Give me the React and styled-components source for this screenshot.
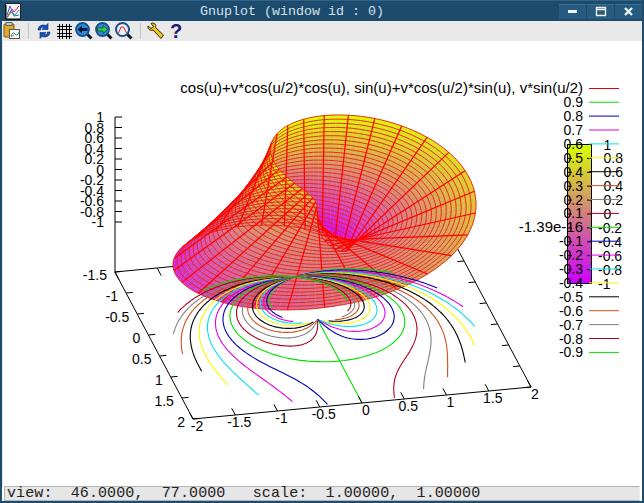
import React from 'react';
import styled, { createGlobalStyle } from 'styled-components';

const GlobalStyle = createGlobalStyle`
  html, body {
    margin: 0;
    padding: 0;
    background: #fff;
  }
`;

const Window = styled.div`
  width: 644px;
  height: 503px;
  box-sizing: border-box;
  display: flex;
  flex-direction: column;
  background: #fff;
  border: solid #1e4c6e;
  border-width: 0 2px 2px;
  overflow: hidden;
`;

const TitleBar = styled.div`
  height: 21px;
  flex: none;
  margin: 0 -2px;
  display: flex;
  align-items: center;
  background: #1c4b6d;
  border-top: 1px solid #2f6488;
  box-sizing: border-box;
  padding: 0 2px 0 5px;
`;

const Title = styled.div`
  flex: 1;
  padding-left: 4px;
  text-align: center;
  color: #d4e0e8;
  font: 13.33px 'Liberation Mono', monospace;
  white-space: pre;
`;

const WindowButtons = styled.div`
  display: flex;
  gap: 1px;
`;

const WindowButton = styled.div`
  width: 27px;
  height: 15px;
  display: flex;
  align-items: center;
  justify-content: center;
  background: #265a7e;
  border-top: 1px solid #3c7092;
  box-sizing: border-box;
`;

const Toolbar = styled.div`
  height: 20px;
  flex: none;
  display: flex;
  align-items: center;
  background: #e9e9e9;
`;

const ToolButton = styled.div`
  width: 20px;
  height: 20px;
  display: flex;
  align-items: center;
  justify-content: center;
`;

const ToolSeparator = styled.div`
  width: 12px;
  height: 16px;
  display: flex;
  justify-content: center;

  &::before {
    content: '';
    width: 1px;
    background: #c4c4c4;
  }
`;

const HelpMark = styled.span`
  color: #1a1a78;
  font: bold 20px 'Liberation Sans', sans-serif;
  line-height: 20px;
`;

const PlotArea = styled.div`
  flex: 1;
  min-height: 0;
  background: #fff;
  border-left: 1px solid #dfe5ea;

  svg {
    display: block;
    width: 100%;
    height: 100%;
  }
`;

const PlotLabel = styled.text`
  font: ${(p) => (p.$wide ? 15 : 14)}px 'Liberation Sans', sans-serif;
  fill: #000;
`;

const StatusBar = styled.div`
  height: 15px;
  flex: none;
  margin: 0 2px 0 2px;
  box-sizing: border-box;
  background: #e6e6e6;
  border: 1px solid #b4b4b4;
  border-right-color: #eee;
  color: #222;
  padding-left: 2px;
  font: 15px/13px 'Liberation Mono', monospace;
  letter-spacing: 0.1px;
  white-space: pre;
`;

// projection fitted to view 46,77 on this plot
const project = (x, y, z) => [
  317.4 + 22.3 * x + 84.5 * y,
  319 + 42 * x - 8 * y - (z === null ? 0 : 52.5 * (z + 1.95)),
];
const depth = (x, y, z) => 0.4 * x - 0.081 * y + 0.469 * z;

const mobius = (u, v) => [
  Math.cos(u) + v * Math.cos(u / 2) * Math.cos(u),
  Math.sin(u) + v * Math.cos(u / 2) * Math.sin(u),
  v * Math.sin(u / 2),
];

const paletteColor = (z) => {
  const t = (z + 1) / 2;
  const r = Math.round(208 + 16 * t);
  const g = Math.round(255 * t);
  const b = Math.round(255 * (1 - t));
  return `rgb(${r},${g},${b})`;
};

const pt = (p) => `${p[0].toFixed(1)} ${p[1].toFixed(1)}`;

// 30 isolines each way, with the u direction sampled finer so the rim stays round
const ISO = 29;
const FINE = 4;

const screen = (i, j) => {
  const p = mobius((i / (ISO * FINE)) * 2 * Math.PI, -1 + (j / ISO) * 2);
  return project(p[0], p[1], p[2]);
};

const buildQuads = () => {
  const quads = [];
  for (let i = 0; i < ISO * FINE; i++) {
    for (let j = 0; j < ISO; j++) {
      const mid = mobius(((i + 0.5) / (ISO * FINE)) * 2 * Math.PI, -1 + ((j + 0.5) / ISO) * 2);
      quads.push({
        key: `${i}-${j}`,
        d: depth(mid[0], mid[1], mid[2]),
        fill: paletteColor(mid[2]),
        shape: `M${pt(screen(i, j))}L${pt(screen(i + 1, j))}L${pt(screen(i + 1, j + 1))}L${pt(screen(i, j + 1))}Z`,
      });
    }
  }
  return quads.sort((a, b) => a.d - b.d);
};

const QUADS = buildQuads();

// the mesh is drawn over the filled surface with no hidden line removal
const buildRadials = () => {
  let d = '';
  for (let i = 0; i <= ISO; i++) {
    d += `M${pt(screen(i * FINE, 0))}L${pt(screen(i * FINE, ISO))}`;
  }
  return d;
};
const buildRings = () => {
  let d = '';
  for (let j = 0; j <= ISO; j++) {
    for (let i = 0; i <= ISO * FINE; i++) {
      d += `${i ? 'L' : 'M'}${pt(screen(i, j))}`;
    }
  }
  return d;
};
const RADIAL_MESH = buildRadials();
const RING_MESH = buildRings();

const LINE_COLORS = ['#00e000', '#0000b0', '#e000e0', '#00e0e8', '#f8f800', '#000000', '#d0501c', '#808080', '#b00020'];

const levelPath = (level) => {
  const start = 2 * Math.asin(Math.abs(level));
  const end = 2 * Math.PI - start;
  let d = '';
  for (let k = 0; k <= 240; k++) {
    const u = start + ((end - start) * k) / 240;
    const v = level / Math.sin(u / 2);
    const p = mobius(u, Math.max(-1, Math.min(1, v)));
    d += `${k ? 'L' : 'M'}${pt(project(p[0], p[1], null))}`;
  }
  return d;
};

const zeroPath = () => {
  let d = '';
  for (let k = 0; k <= 120; k++) {
    const a = (k / 120) * 2 * Math.PI;
    d += `${k ? 'L' : 'M'}${pt(project(Math.cos(a), Math.sin(a), null))}`;
  }
  return `${d}M${pt(project(0, 0, null))}L${pt(project(2, 0, null))}`;
};

const ZERO_LABEL = '-1.39e-16';

// legend rows: label and colour, one row for each contour level
const LEGEND = [];
for (let i = 1; i < 20; i++) {
  const level = 1 - i / 10;
  const label = i === 10 ? ZERO_LABEL : String(Number(level.toFixed(1)));
  LEGEND.push({ label, color: LINE_COLORS[(i - 1) % 9], y: 88.3 + i * 13.9 });
}

const CONTOURS = LEGEND.map((row) => ({
  key: row.label,
  color: row.color,
  d: row.label === ZERO_LABEL ? zeroPath() : levelPath(Number(row.label)),
}));

const XTICKS = [-1.5, -1, -0.5, 0, 0.5, 1, 1.5, 2];
const YTICKS = [-2, -1.5, -1, -0.5, 0, 0.5, 1, 1.5, 2];
const ZTICKS = [1, 0.8, 0.6, 0.4, 0.2, 0, -0.2, -0.4, -0.6, -0.8, -1];
const CB_TICKS = [1, 0.8, 0.6, 0.4, 0.2, 0, -0.2, -0.4, -0.6, -0.8, -1];

const line = (a, b) => `M${pt(a)}L${pt(b)}`;
const base = (x, y) => project(x, y, null);

const backAxes =
  line(base(-1.5, -2), base(-1.5, 2)) +
  line(base(-1.5, 2), base(2, 2)) +
  XTICKS.map((x) => line(base(x, 2), base(x, 1.92))).join('') +
  YTICKS.map((y) => line(base(-1.5, y), base(-1.32, y))).join('');

const frontAxes =
  line(base(-1.5, -2), base(2, -2)) +
  line(base(2, -2), base(2, 2)) +
  line([115, 117], [115, 272]) +
  XTICKS.map((x) => line(base(x, -2), base(x, -1.92))).join('') +
  YTICKS.map((y) => line(base(2, y), base(1.84, y))).join('') +
  ZTICKS.map((z, i) => line([115, 117 + i * 10.5], [122, 117 + i * 10.5])).join('');

function Plot() {
  return (
    <svg viewBox="3 41 639 445" preserveAspectRatio="none">
      <defs>
        <linearGradient id="cbox" x1="0" y1="0" x2="0" y2="1">
          <stop offset="0" stopColor="#d8ff00" />
          <stop offset="1" stopColor="#cc00ff" />
        </linearGradient>
      </defs>

      <path d={backAxes} stroke="#000" strokeWidth="1" fill="none" />

      {QUADS.map((q) => (
        <path key={q.key} d={q.shape} fill={q.fill} stroke={q.fill} strokeWidth="0.4" />
      ))}

      <path d={RING_MESH} stroke="#ec1c10" strokeWidth="0.9" fill="none" />
      <path d={RADIAL_MESH} stroke="#ff0000" strokeWidth="1.2" fill="none" />

      {CONTOURS.map((c) => (
        <path key={c.key} d={c.d} stroke={c.color} strokeWidth="1.1" fill="none" />
      ))}

      <path d={frontAxes} stroke="#000" strokeWidth="1" fill="none" />

      {ZTICKS.map((z, i) => (
        <PlotLabel key={z} x="104" y={122 + i * 10.5} textAnchor="end">{z}</PlotLabel>
      ))}
      {XTICKS.map((x) => {
        const p = base(x, -2);
        return <PlotLabel key={x} x={p[0] - 8} y={p[1] + 8} textAnchor="end">{x}</PlotLabel>;
      })}
      {YTICKS.map((y) => {
        const p = base(2, y);
        return <PlotLabel key={y} x={p[0] + 4} y={p[1] + 12} textAnchor="middle">{y}</PlotLabel>;
      })}

      <rect x="567.5" y="144.5" width="24" height="139" fill="url(#cbox)" stroke="#000" />
      {CB_TICKS.map((t, i) => {
        const y = 144.5 + i * 13.9;
        return (
          <g key={t}>
            <path d={`M567 ${y}h5M592 ${y}h-5`} stroke="#000" />
            <PlotLabel x={t < 0 ? 598 : 603.5} y={y + 5}>{t}</PlotLabel>
          </g>
        );
      })}

      <PlotLabel $wide x="583" y="93" textAnchor="end">cos(u)+v*cos(u/2)*cos(u), sin(u)+v*cos(u/2)*sin(u), v*sin(u/2)</PlotLabel>
      <path d="M589 88.5h30" stroke="#e00000" />
      {LEGEND.map((row) => (
        <g key={row.label}>
          <PlotLabel $wide={row.label === ZERO_LABEL} x="583" y={row.y + 5} textAnchor="end">{row.label}</PlotLabel>
          <path d={`M589 ${row.y}h30`} stroke={row.color} />
        </g>
      ))}
    </svg>
  );
}

const AppIcon = () => (
  <svg width="16" height="17" viewBox="0 0 16 17">
    <rect x="0.5" y="0.5" width="15" height="16" fill="#f4f4f4" stroke="#222" />
    <path d="M2 14L7 6L9 9L14 3" stroke="#e02090" fill="none" />
    <path d="M2 15L6 9L10 12L14 7" stroke="#30b040" fill="none" />
    <path d="M2 12L5 3L9 13L14 12" stroke="#4060e0" fill="none" />
    <path d="M1 2v14h14" stroke="#000" fill="none" />
  </svg>
);

const PasteIcon = () => (
  <svg width="18" height="18" viewBox="0 0 18 18">
    <rect x="1" y="2" width="10" height="13" rx="1" fill="#e0a828" stroke="#7a5410" />
    <rect x="3" y="0.5" width="6" height="3" fill="#c8c8c8" stroke="#666" />
    <rect x="6.5" y="7.5" width="10" height="9" fill="#fff" stroke="#555" />
    <path d="M8 14q2-5 4-2t4-2" stroke="#18a048" fill="none" />
    <path d="M8 15l3-2" stroke="#e05050" fill="none" />
  </svg>
);

const RefreshIcon = () => (
  <svg width="14" height="16" viewBox="0 0 14 16">
    <path d="M1 7C1 3 5 1 9 2.5L11 0.5V6.5H5L7 4.5C5 4 3.5 5 3.5 7Z" fill="#1450b8" stroke="#0a2a70" strokeWidth="0.6" />
    <path d="M13 9C13 13 9 15 5 13.5L3 15.5V9.5H9L7 11.5C9 12 10.5 11 10.5 9Z" fill="#1450b8" stroke="#0a2a70" strokeWidth="0.6" />
  </svg>
);

const GridIcon = () => (
  <svg width="15" height="15" viewBox="0 0 15 15">
    <path d="M2.5 0V15M5.5 0V15M9.5 0V15M12.5 0V15M0 2.5H15M0 5.5H15M0 9.5H15M0 12.5H15" stroke="#000" />
  </svg>
);

const Lens = ({ children }) => (
  <svg width="18" height="18" viewBox="0 0 18 18">
    <path d="M12 12L16.5 16.5" stroke="#101830" strokeWidth="3" />
    <circle cx="7.5" cy="7.5" r="6.5" fill="#2f8ad8" stroke="#14508c" strokeWidth="1.8" />
    {children}
  </svg>
);

const LensLeft = () => (
  <Lens>
    <path d="M2.5 7.5L7 3.5V6H12.5V9H7V11.5Z" fill="#06163c" />
  </Lens>
);

const LensRight = () => (
  <Lens>
    <path d="M12.5 7.5L8 3.5V6H2.5V9H8V11.5Z" fill="#30d040" stroke="#063010" strokeWidth="0.6" />
  </Lens>
);

const LensChart = () => (
  <svg width="18" height="18" viewBox="0 0 18 18">
    <path d="M12 12L16.5 16.5" stroke="#101830" strokeWidth="3" />
    <circle cx="7.5" cy="7.5" r="6.5" fill="#eef0f6" stroke="#14508c" strokeWidth="2" />
    <path d="M3.5 11L6 5H8.5L11.5 11" stroke="#e02020" fill="none" />
  </svg>
);

const WrenchIcon = () => (
  <svg width="18" height="18" viewBox="0 0 18 18">
    <path d="M1 4L4 6.5L6.5 4.5L4 1.5C7 0 9.5 2.5 8.5 5.5L16.5 13L14 16.5L6 8C3 9 0.5 7 1 4Z" fill="#f0c020" stroke="#3a2a08" />
  </svg>
);

const WindowGlyph = ({ kind }) => (
  <svg width="14" height="11" viewBox="0 0 14 11">
    {kind === 'min' && <rect x="2" y="4" width="9" height="3" fill="#eef2f4" />}
    {kind === 'max' && <path d="M2.5 1.5H11.5V9.5H2.5ZM2.5 3.5H11.5" stroke="#eef2f4" strokeWidth="1.4" fill="none" />}
    {kind === 'close' && <path d="M3 2L10 9M10 2L3 9" stroke="#eef2f4" strokeWidth="2.4" />}
  </svg>
);

export default function App() {
  return (
    <>
      <GlobalStyle />
      <Window>
        <TitleBar>
          <AppIcon />
          <Title>Gnuplot (window id : 0)</Title>
          <WindowButtons>
            <WindowButton><WindowGlyph kind="min" /></WindowButton>
            <WindowButton><WindowGlyph kind="max" /></WindowButton>
            <WindowButton><WindowGlyph kind="close" /></WindowButton>
          </WindowButtons>
        </TitleBar>
        <Toolbar>
          <ToolButton><PasteIcon /></ToolButton>
          <ToolSeparator />
          <ToolButton><RefreshIcon /></ToolButton>
          <ToolButton><GridIcon /></ToolButton>
          <ToolButton><LensLeft /></ToolButton>
          <ToolButton><LensRight /></ToolButton>
          <ToolButton><LensChart /></ToolButton>
          <ToolSeparator />
          <ToolButton><WrenchIcon /></ToolButton>
          <ToolButton><HelpMark>?</HelpMark></ToolButton>
        </Toolbar>
        <PlotArea>
          <Plot />
        </PlotArea>
        <StatusBar>view:  46.0000,  77.0000   scale:  1.00000,  1.00000</StatusBar>
      </Window>
    </>
  );
}
